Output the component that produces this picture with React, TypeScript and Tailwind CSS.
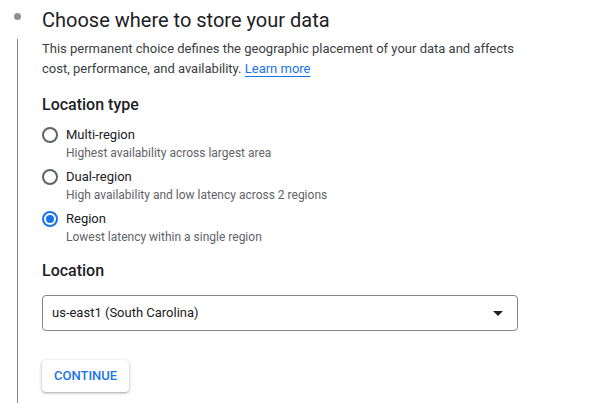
import React from 'react';

type Option = { id: string; label: string; hint: string };

const LOCATION_TYPES: Option[] = [
    { id: 'multi', label: 'Multi-region', hint: 'Highest availability across largest area' },
    { id: 'dual', label: 'Dual-region', hint: 'High availability and low latency across 2 regions' },
    { id: 'region', label: 'Region', hint: 'Lowest latency within a single region' },
];

const Radio: React.FC<{ checked: boolean }> = ({ checked }) => (
    <span
        className={`mt-[2px] flex h-4 w-4 shrink-0 items-center justify-center rounded-full border-2 ${
            checked ? 'border-[#1a73e8]' : 'border-[#5f6368]'
        }`}
    >
        {checked && <span className="h-2 w-2 rounded-full bg-[#1a73e8]" />}
    </span>
);

export default function App() {
    const [selected, setSelected] = React.useState('region');

    return (
        <div className="flex min-h-[403px] bg-white font-['Roboto','Liberation_Sans',sans-serif] text-[#202124]">
            {/* stepper rail */}
            <div className="flex w-[34px] shrink-0 flex-col items-center">
                <span className="mt-[13px] h-[7px] w-[7px] rounded-full bg-[#8f8f8f]" />
                <span className="mt-[19px] w-px flex-1 bg-[#80868b]" />
            </div>

            <div className="ml-2 flex w-[476px] flex-col pt-[6px]">
                <h2 className="text-[20px] leading-[28px] font-normal">Choose where to store your data</h2>
                <p className="mt-[5px] text-[13px] leading-[20px] text-[#3c4043]">
                    This permanent choice defines the geographic placement of your data and affects cost, performance,
                    and availability.{' '}
                    <a href="#" className="text-[#1a73e8] underline underline-offset-[3px]">
                        Learn more
                    </a>
                </p>

                <h3 className="mt-[14px] text-[16px] leading-[24px] font-medium">Location type</h3>
                <div className="mt-2 flex flex-col gap-[6px]">
                    {LOCATION_TYPES.map((o) => (
                        <label key={o.id} className="flex cursor-pointer gap-2" onClick={() => setSelected(o.id)}>
                            <Radio checked={selected === o.id} />
                            <span className="flex flex-col">
                                <span className="text-[13px] leading-[20px]">{o.label}</span>
                                <span className="text-[12px] leading-[16px] text-[#5f6368]">{o.hint}</span>
                            </span>
                        </label>
                    ))}
                </div>

                <h3 className="mt-[14px] text-[16px] leading-[24px] font-medium">Location</h3>
                <div className="mt-[12px] flex h-[36px] items-center justify-between rounded border border-[#80868b] pl-[9px] pr-[14px]">
                    <span className="text-[13px] text-[#202124]">us-east1 (South Carolina)</span>
                    <svg width="10" height="5" viewBox="0 0 10 5" className="fill-[#202124]">
                        <path d="M0 0l5 5 5-5z" />
                    </svg>
                </div>

                <div className="mt-[29px]">
                    <button className="h-8 rounded bg-white px-3 text-[13px] font-medium text-[#1a73e8] shadow-[0_1px_2px_rgba(60,64,67,0.3),0_1px_3px_1px_rgba(60,64,67,0.15)]">
                        CONTINUE
                    </button>
                </div>
            </div>
        </div>
    );
}
